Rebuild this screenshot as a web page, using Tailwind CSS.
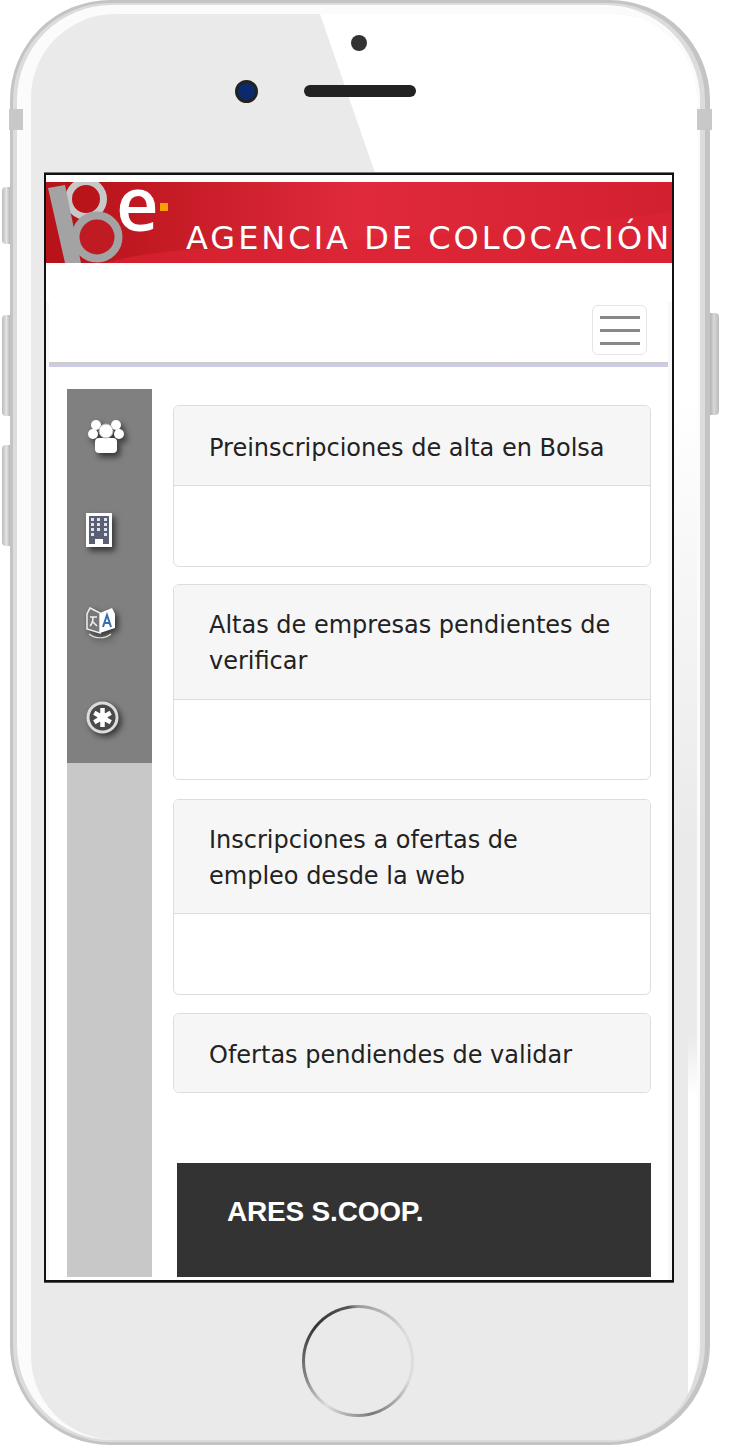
<!DOCTYPE html>
<html lang="en">
<head>
  <meta charset="UTF-8" />
  <title>Agencia de colocación</title>
  <script src="https://cdn.jsdelivr.net/npm/@tailwindcss/browser@4"></script>
</head>
<body class="bg-white w-[736px] h-[1456px] overflow-hidden font-['DejaVu_Sans',sans-serif]">
  <div class="relative w-[736px] h-[1456px]">
    <!-- side buttons -->
    <div class="absolute left-[2px] top-[187px] w-[9px] h-[57px] rounded-l-sm bg-gradient-to-r from-[#bbb] via-[#e4e4e4] to-[#aaa]"></div>
    <div class="absolute left-[2px] top-[315px] w-[9px] h-[101px] rounded-l-sm bg-gradient-to-r from-[#bbb] via-[#e4e4e4] to-[#aaa]"></div>
    <div class="absolute left-[2px] top-[445px] w-[9px] h-[101px] rounded-l-sm bg-gradient-to-r from-[#bbb] via-[#e4e4e4] to-[#aaa]"></div>
    <div class="absolute left-[709px] top-[313px] w-[10px] h-[102px] rounded-r-sm bg-gradient-to-r from-[#aaa] via-[#d8d8d8] to-[#bbb]"></div>

    <!-- phone body -->
    <div class="absolute left-[10px] top-0 w-[700px] h-[1445px] rounded-[100px] bg-[#c4c4c4] pt-[3px] pb-[3px] pl-[3px] pr-[5px]">
      <div class="w-full h-full rounded-[97px] bg-[#dcdcdc] pt-[2px] pb-[2px] pl-[4px] pr-[5px]">
        <div class="w-full h-full rounded-[95px] bg-[#fbfbfb] pt-[9px] pl-[14px] pr-[3px]">
          <div class="relative w-[666px] h-[1426px] rounded-[84px] bg-[#eaeaea] overflow-hidden">
            <!-- glass reflection -->
            <div class="absolute inset-0 bg-gradient-to-b from-white from-27% to-[#eaeaea] to-58% [clip-path:polygon(289px_0,666px_0,666px_1268px,643px_1268px,643px_159px,344px_159px)]"></div>
            <div class="absolute right-0 top-[1020px] bottom-0 w-[9px] bg-gradient-to-b from-[#eaeaea] to-white to-15%"></div>
          </div>
        </div>
      </div>
    </div>
    <div class="absolute left-[9px] top-[109px] w-[14px] h-[21px] bg-[#c8c8c8]"></div>
    <div class="absolute left-[697px] top-[109px] w-[15px] h-[21px] bg-[#c8c8c8]"></div>

    <!-- sensor, camera, speaker -->
    <div class="absolute left-[351px] top-[35px] w-4 h-4 rounded-full bg-[#333]"></div>
    <div class="absolute left-[235px] top-[80px] w-[23px] h-[23px] rounded-full bg-[#0b2a6b] border-[3px] border-[#222]"></div>
    <div class="absolute left-[304px] top-[85px] w-[112px] h-3 rounded-full bg-[#222]"></div>

    <!-- home button -->
    <div class="absolute left-[302px] top-[1305px] w-[112px] h-[112px] rounded-full p-[3px] bg-[conic-gradient(#999_0deg,#ddd_60deg,#ddd_110deg,#777_165deg,#ddd_215deg,#888_250deg,#333_310deg,#555_350deg,#999_360deg)]">
      <div class="w-full h-full rounded-full bg-[#eaeaea]"></div>
    </div>

    <!-- screen -->
    <div class="absolute left-[44px] top-[173px] w-[630px] h-[1109px] border-2 border-[#111] bg-white overflow-hidden shadow-[0_1px_0_#555,0_-1px_0_#777]">
      <div class="absolute left-0 top-[127px] bottom-0 w-[3px] bg-[#f8f8f8]"></div>
      <div class="absolute right-0 top-[127px] bottom-0 w-[4px] bg-[#f8f8f8]"></div>
      <div class="mt-[7px] h-[81px] relative bg-gradient-to-r from-[#b81319] from-5% via-[#e02a3c] via-50% to-[#d3202f]">
        <svg class="absolute left-0 top-0" width="626" height="81" viewBox="0 0 626 81">
          <path d="M60 81 C150 55 300 70 626 30 L626 81Z" fill="#dc2433" opacity=".7"/>
          <circle cx="40" cy="17" r="17.500" fill="none" stroke="#c8c8c8" stroke-width="7"/>
          <path d="M2 6 L19 3 L35 81 L19 81Z" fill="#a3a3a3"/>
          <circle cx="51" cy="55" r="21.500" fill="#c01a22" stroke="#a3a3a3" stroke-width="8"/>
          <rect x="114" y="21" width="8" height="8" fill="#f7a100"/>
        </svg>
        <span class="absolute left-[70px] top-[2px] text-[74px] leading-[38px] font-semibold text-white font-['Open_Sans',sans-serif]">e</span>
        <span class="absolute left-[140px] top-[36px] text-[32px] leading-[40px] tracking-[3px] text-white whitespace-nowrap font-['DejaVu_Sans',sans-serif]">AGENCIA DE COLOCACIÓN</span>
      </div>

      <div class="h-[99px] flex justify-end items-start pt-[42px] pr-[25px]">
        <button class="w-[55px] h-[50px] pt-[1px] rounded-md border border-[#e4e4e4] flex flex-col gap-[10px] items-center justify-center">
          <span class="block w-10 h-[3px] bg-[#888]"></span>
          <span class="block w-10 h-[3px] bg-[#888]"></span>
          <span class="block w-10 h-[3px] bg-[#888]"></span>
        </button>
      </div>
      <div class="mx-[3px] w-[619px] h-[5px] bg-gradient-to-b from-[#ccc] to-[#ccccee]"></div>

      <div class="flex h-[913px] pt-[22px] pl-[21px]">
        <aside class="w-[85px] h-[888px] bg-[#c8c8c8] shrink-0">
          <div class="h-[374px] bg-[#808080] flex flex-col items-start pt-[31px] pl-[19px]">
            <svg class="ml-[2px] drop-shadow-[3px_4px_3px_rgba(0,0,0,.6)]" width="36" height="33" viewBox="0 0 36 33" fill="#fff">
              <circle cx="8" cy="5" r="5"/><circle cx="28" cy="5" r="5"/>
              <circle cx="5" cy="14" r="5"/><circle cx="31" cy="14" r="5"/>
              <rect x="7" y="18" width="22" height="15" rx="4"/>
              <circle cx="18" cy="11" r="7" stroke="#b8b8b8" stroke-width="1"/>
            </svg>
            <svg class="mt-[60px] drop-shadow-[3px_4px_3px_rgba(0,0,0,.6)]" width="26" height="34" viewBox="0 0 26 34">
              <rect width="26" height="34" fill="#fff"/>
              <rect x="3" y="3" width="20" height="28" fill="#5a5f72"/>
              <g fill="#dfe4f5">
                <rect x="5" y="5" width="3" height="3"/><rect x="11" y="5" width="3" height="3"/><rect x="18" y="5" width="3" height="3"/>
                <rect x="5" y="10" width="3" height="3"/><rect x="11" y="10" width="3" height="3"/><rect x="18" y="10" width="3" height="3"/>
                <rect x="5" y="15" width="3" height="3"/><rect x="11" y="15" width="3" height="3"/><rect x="18" y="15" width="3" height="3"/>
                <rect x="5" y="20" width="3" height="3"/><rect x="18" y="20" width="3" height="3"/>
              </g>
              <rect x="9" y="26" width="8" height="5" fill="#fff"/>
            </svg>
            <svg class="mt-[60px] drop-shadow-[3px_3px_3px_rgba(0,0,0,.6)]" width="30" height="32" viewBox="0 0 30 32">
              <path d="M4 1l10 5v20L1 22V7z" fill="#777" stroke="#eee" stroke-width="1.5"/>
              <path d="M26 1L14 6v20l15-5V7z" fill="#fff"/>
              <path d="M4 10h7M7 10c0 5-1 7-3 9M6 14l5 5" stroke="#eee" stroke-width="1.6" fill="none"/>
              <path d="M17 20l4-12 4 12M18.500 16h5" stroke="#3a6ea8" stroke-width="2" fill="none"/>
              <path d="M3 27c6 5 16 5 22 0" stroke="#ddd" stroke-width="1.2" fill="none"/>
            </svg>
            <svg class="mt-[62px] drop-shadow-[3px_3px_3px_rgba(0,0,0,.6)]" width="33" height="33" viewBox="0 0 33 33">
              <circle cx="16.500" cy="16.500" r="14.500" fill="#4a4a4a" stroke="#dcdcdc" stroke-width="3"/>
              <g stroke="#fff" stroke-width="4.500">
                <path d="M16.500 7v19M8.300 11.750l16.400 9.500M24.700 11.750l-16.400 9.500"/>
              </g>
              <circle cx="16.500" cy="16.500" r="5" fill="#fff"/>
            </svg>
          </div>
        </aside>

        <div class="ml-[21px] w-[478px] pt-[16px] text-[24px] leading-[36px] text-[#222]">
          <section class="h-[162px] mb-[17px] rounded-md border border-[#ddd] overflow-hidden">
            <h3 class="h-[80px] px-[35px] pt-[24px] bg-[#f6f6f6] border-b border-[#ddd] font-normal">Preinscripciones de alta en Bolsa</h3>
          </section>
          <section class="h-[196px] mb-[19px] rounded-md border border-[#ddd] overflow-hidden">
            <h3 class="h-[115px] px-[35px] pt-[22px] bg-[#f6f6f6] border-b border-[#ddd] font-normal">Altas de empresas pendientes de verificar</h3>
          </section>
          <section class="h-[196px] mb-[18px] rounded-md border border-[#ddd] overflow-hidden">
            <h3 class="h-[114px] px-[35px] pt-[22px] bg-[#f6f6f6] border-b border-[#ddd] font-normal">Inscripciones a ofertas de<br />empleo desde la web</h3>
          </section>
          <section class="h-[80px] rounded-md border border-[#ddd] overflow-hidden">
            <h3 class="h-[79px] px-[35px] pt-[23px] bg-[#f6f6f6] font-normal">Ofertas pendiendes de validar</h3>
          </section>
          <footer class="ml-[4px] mt-[70px] w-[474px] h-[114px] bg-[#333] pl-[50px] pt-[33px] text-[28px] leading-[32px] tracking-[-0.2px] font-bold text-white font-['Liberation_Sans',sans-serif]">ARES S.COOP.</footer>
        </div>
      </div>
    </div>
  </div>
</body>
</html>
